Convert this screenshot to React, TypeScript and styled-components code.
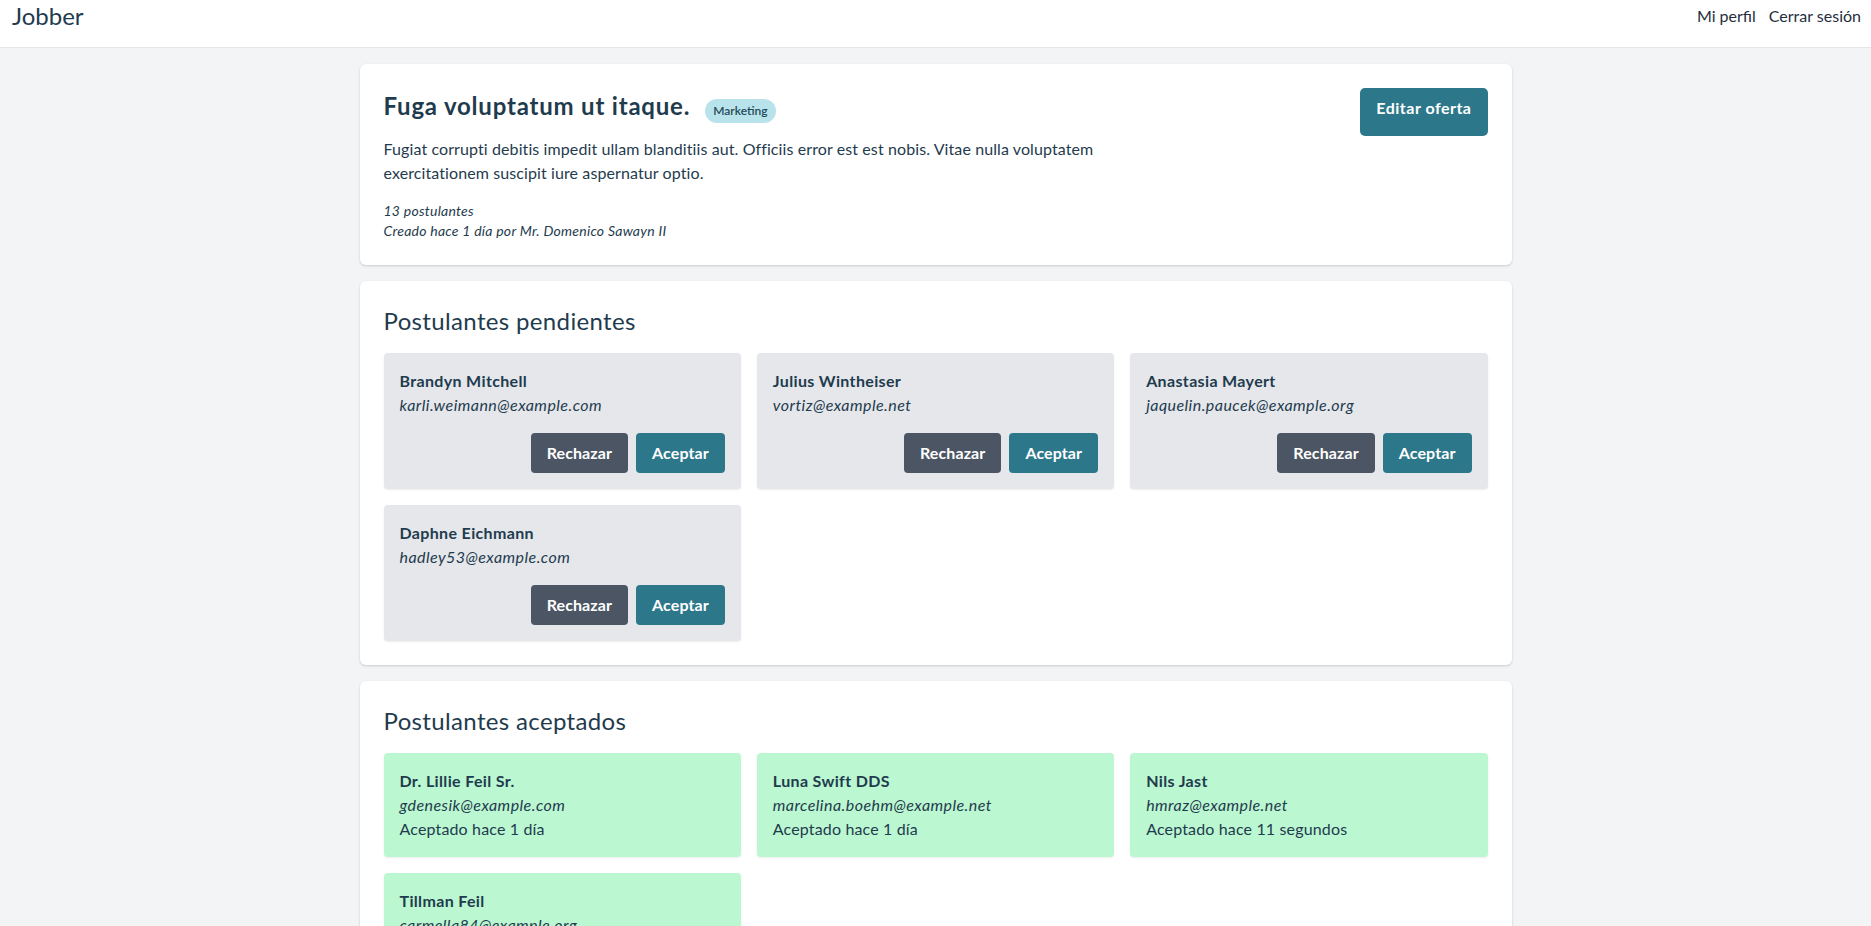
import React from "react";
import styled, { createGlobalStyle } from "styled-components";

const GlobalStyle = createGlobalStyle`
  html { scrollbar-width: none; }
  ::-webkit-scrollbar { display: none; }
  body {
    margin: 0;
    background: #f3f4f6;
    font-family: Lato, "Open Sans", sans-serif;
    color: #1f3b4e;
  }
  * { box-sizing: border-box; }
`;

const Header = styled.header`
  display: flex;
  justify-content: space-between;
  align-items: flex-start;
  height: 48px;
  padding: 0 10px 0 12px;
  background: #ffffff;
  border-bottom: 1px solid #e5e7eb;
`;

const Brand = styled.a`
  font-size: 24px;
  line-height: 32px;
  color: #1f3b4e;
  text-decoration: none;
`;

const Nav = styled.nav`
  display: flex;
  align-items: center;
  height: 32px;
  gap: 13px;
`;

const NavLink = styled.a`
  font-size: 16px;
  line-height: 24px;
  color: #1f2f3e;
  text-decoration: none;
`;

const Main = styled.main`
  max-width: 1152px;
  margin: 0 auto;
  padding: 16px 0 16px;
  display: flex;
  flex-direction: column;
  gap: 16px;
`;

const Panel = styled.section`
  background: #ffffff;
  border-radius: 6px;
  padding: 24px;
  box-shadow: 0 1px 3px rgba(0, 0, 0, 0.12), 0 1px 2px rgba(0, 0, 0, 0.06);
`;

const OfferTop = styled.div`
  display: flex;
  justify-content: space-between;
  align-items: flex-start;
`;

const OfferInfo = styled.div`
  display: flex;
  flex-direction: column;
`;

const TitleRow = styled.div`
  display: flex;
  align-items: baseline;
  gap: 15px;
  padding-top: 2px;
  margin-bottom: -2px;
`;

const Title = styled.h1`
  margin: 0;
  font-size: 24px;
  line-height: 32px;
  font-weight: 700;
  letter-spacing: 0.8px;
  color: #1f3b4e;
`;

const Badge = styled.span`
  display: inline-block;
  padding: 4px 8px;
  font-size: 12px;
  line-height: 16px;
  font-weight: 600;
  color: #1f4a58;
  background: #b9e3ea;
  border-radius: 9999px;
`;

const Description = styled.p`
  margin: 16px 0 0;
  max-width: 768px;
  font-size: 16px;
  line-height: 24px;
  letter-spacing: 0.1px;
  color: #1f3b4e;
`;

const Meta = styled.div`
  margin-top: 16px;
  font-size: 14px;
  line-height: 20px;
  font-style: italic;
  letter-spacing: 0.25px;
  color: #1f3b4e;
`;

const Button = styled.button<{ $variant?: "primary" | "dark"; $size?: "lg" | "md" }>`
  border: none;
  cursor: pointer;
  font-family: inherit;
  font-size: 16px;
  line-height: 24px;
  font-weight: 700;
  color: #ffffff;
  letter-spacing: ${(p) => (p.$size === "lg" ? "0.5px" : "0.1px")};
  padding: ${(p) => (p.$size === "lg" ? "8px 16px 16px" : "8px 16px")};
  border-radius: ${(p) => (p.$size === "lg" ? "5px" : "4px")};
  background: ${(p) => (p.$variant === "dark" ? "#4b5563" : "#2c788a")};
`;

const SectionTitle = styled.h2`
  margin: 0;
  font-size: 24px;
  line-height: 32px;
  font-weight: 400;
  letter-spacing: 0.35px;
  color: #1f3b4e;
`;

const Grid = styled.div`
  margin-top: 16px;
  display: grid;
  grid-template-columns: repeat(3, 1fr);
  gap: 16px;
`;

const ApplicantCard = styled.div<{ $accepted?: boolean }>`
  display: flex;
  flex-direction: column;
  padding: 16px;
  border-radius: 4px;
  background: ${(p) => (p.$accepted ? "#bbf7d0" : "#e5e7eb")};
  box-shadow: 0 1px 2px rgba(0, 0, 0, 0.08);
`;

const Name = styled.div`
  font-size: 16px;
  line-height: 24px;
  font-weight: 700;
  letter-spacing: 0.35px;
  color: #1f3b4e;
`;

const Email = styled.div`
  font-size: 16px;
  line-height: 24px;
  font-style: italic;
  letter-spacing: 0.45px;
  color: #1f3b4e;
`;

const Info = styled.div`
  font-size: 16px;
  line-height: 24px;
  letter-spacing: 0.15px;
  color: #1f3b4e;
`;

const Actions = styled.div`
  margin-top: 16px;
  display: flex;
  justify-content: flex-end;
  gap: 8px;
`;

const pending = [
  { name: "Brandyn Mitchell", email: "karli.weimann@example.com" },
  { name: "Julius Wintheiser", email: "vortiz@example.net" },
  { name: "Anastasia Mayert", email: "jaquelin.paucek@example.org" },
  { name: "Daphne Eichmann", email: "hadley53@example.com" },
];

const accepted = [
  { name: "Dr. Lillie Feil Sr.", email: "gdenesik@example.com", when: "Aceptado hace 1 día" },
  { name: "Luna Swift DDS", email: "marcelina.boehm@example.net", when: "Aceptado hace 1 día" },
  { name: "Nils Jast", email: "hmraz@example.net", when: "Aceptado hace 11 segundos" },
  { name: "Tillman Feil", email: "carmella84@example.org", when: "Aceptado hace 1 día" },
];

export default function App() {
  return (
    <>
      <GlobalStyle />
      <Header>
        <Brand href="#">Jobber</Brand>
        <Nav>
          <NavLink href="#">Mi perfil</NavLink>
          <NavLink href="#">Cerrar sesión</NavLink>
        </Nav>
      </Header>
      <Main>
        <Panel>
          <OfferTop>
            <OfferInfo>
              <TitleRow>
                <Title>Fuga voluptatum ut itaque.</Title>
                <Badge>Marketing</Badge>
              </TitleRow>
              <Description>
                Fugiat corrupti debitis impedit ullam blanditiis aut. Officiis error est est nobis. Vitae nulla
                voluptatem exercitationem suscipit iure aspernatur optio.
              </Description>
              <Meta>
                <div>13 postulantes</div>
                <div>Creado hace 1 día por Mr. Domenico Sawayn II</div>
              </Meta>
            </OfferInfo>
            <Button $size="lg">Editar oferta</Button>
          </OfferTop>
        </Panel>

        <Panel>
          <SectionTitle>Postulantes pendientes</SectionTitle>
          <Grid>
            {pending.map((a) => (
              <ApplicantCard key={a.email}>
                <Name>{a.name}</Name>
                <Email>{a.email}</Email>
                <Actions>
                  <Button $variant="dark">Rechazar</Button>
                  <Button>Aceptar</Button>
                </Actions>
              </ApplicantCard>
            ))}
          </Grid>
        </Panel>

        <Panel>
          <SectionTitle>Postulantes aceptados</SectionTitle>
          <Grid>
            {accepted.map((a) => (
              <ApplicantCard key={a.email} $accepted>
                <Name>{a.name}</Name>
                <Email>{a.email}</Email>
                <Info>{a.when}</Info>
              </ApplicantCard>
            ))}
          </Grid>
        </Panel>
      </Main>
    </>
  );
}
